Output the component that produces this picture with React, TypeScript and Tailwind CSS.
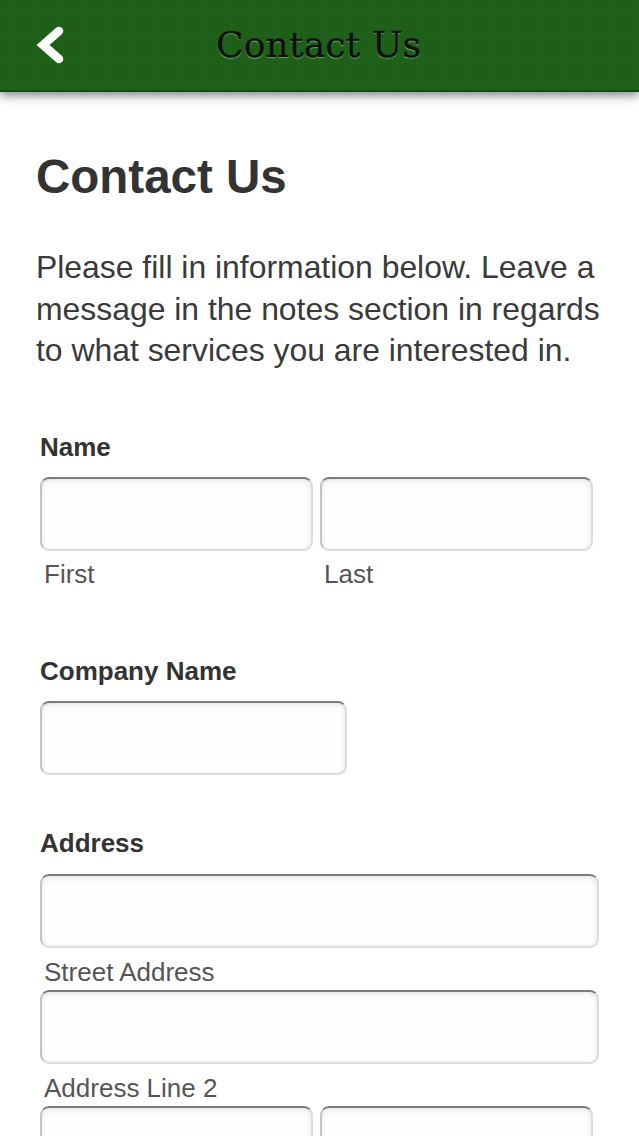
const sans = "font-['Liberation_Sans',Arial,sans-serif]";

const Field = ({ className = "" }: { className?: string }) => (
  <div
    className={`h-[74px] rounded-[9px] border-2 border-[#dcdcda] border-t-[#7c7c7c] border-l-[#c4c4c2] bg-[#fefefe] shadow-[inset_0_3px_6px_rgba(0,0,0,0.06),inset_0_0_4px_rgba(0,0,0,0.07)] ${className}`}
  />
);

const Label = ({ children, className = "" }: { children: string; className?: string }) => (
  <div className={`ml-10 h-[30px] text-[26px] leading-[30px] font-bold text-[#333] ${className}`}>{children}</div>
);

const Sub = ({ children }: { children: string }) => (
  <div className="pl-1 text-[26px] leading-[30px] text-[#555]">{children}</div>
);

export default function App() {
  return (
    <div className={`h-[1136px] overflow-hidden bg-white ${sans}`}>
      <header className="relative flex h-[92px] items-center border-b-2 border-[#14490f] bg-[#1f6118] bg-[radial-gradient(rgba(0,0,0,0.12)_1px,transparent_1px)] bg-[length:3px_3px] shadow-[0_4px_9px_rgba(0,0,0,0.45)]">
        <svg className="ml-[36px] h-[40px] w-[30px]" viewBox="0 0 30 40">
          <path d="M23 6 L7 20 L23 34" fill="none" stroke="#fff" strokeWidth="8.5" strokeLinecap="round" strokeLinejoin="miter" />
        </svg>
        <div className="ml-[150px] font-['DejaVu_Serif',serif] text-[36px] tracking-[0.2px] text-[#071406] [-webkit-text-stroke:0.6px_#071406] [text-shadow:0_1px_1px_rgba(255,255,255,0.6)]">
          Contact Us
        </div>
      </header>

      <h1 className="mt-[54px] ml-[36px] text-[47.5px] leading-[62px] font-bold text-[#333]">Contact Us</h1>

      <p className="mt-[39px] ml-[36px] w-[590px] text-[31.9px] leading-[41.5px] text-[#3a3a3a]">
        Please fill in information below. Leave a message in the notes section in regards to what services you are interested in.
      </p>

      <Label className="mt-[60px]">Name</Label>
      <div className="mt-[15px] ml-10 flex gap-[7px]">
        <div className="w-[273px]">
          <Field />
          <div className="mt-2"><Sub>First</Sub></div>
        </div>
        <div className="w-[273px]">
          <Field />
          <div className="mt-2"><Sub>Last</Sub></div>
        </div>
      </div>

      <Label className="mt-[67px]">Company Name</Label>
      <Field className="mt-[15px] ml-10 w-[307px]" />

      <Label className="mt-[53px]">Address</Label>
      <div className="mt-4 ml-10 w-[559px]">
        <Field />
        <div className="mt-[9px]"><Sub>Street Address</Sub></div>
        <Field className="mt-[3px]" />
        <div className="mt-[9px]"><Sub>Address Line 2</Sub></div>
        <div className="mt-[3px] flex gap-[7px]">
          <Field className="w-[273px]" />
          <Field className="w-[273px]" />
        </div>
      </div>
    </div>
  );
}
